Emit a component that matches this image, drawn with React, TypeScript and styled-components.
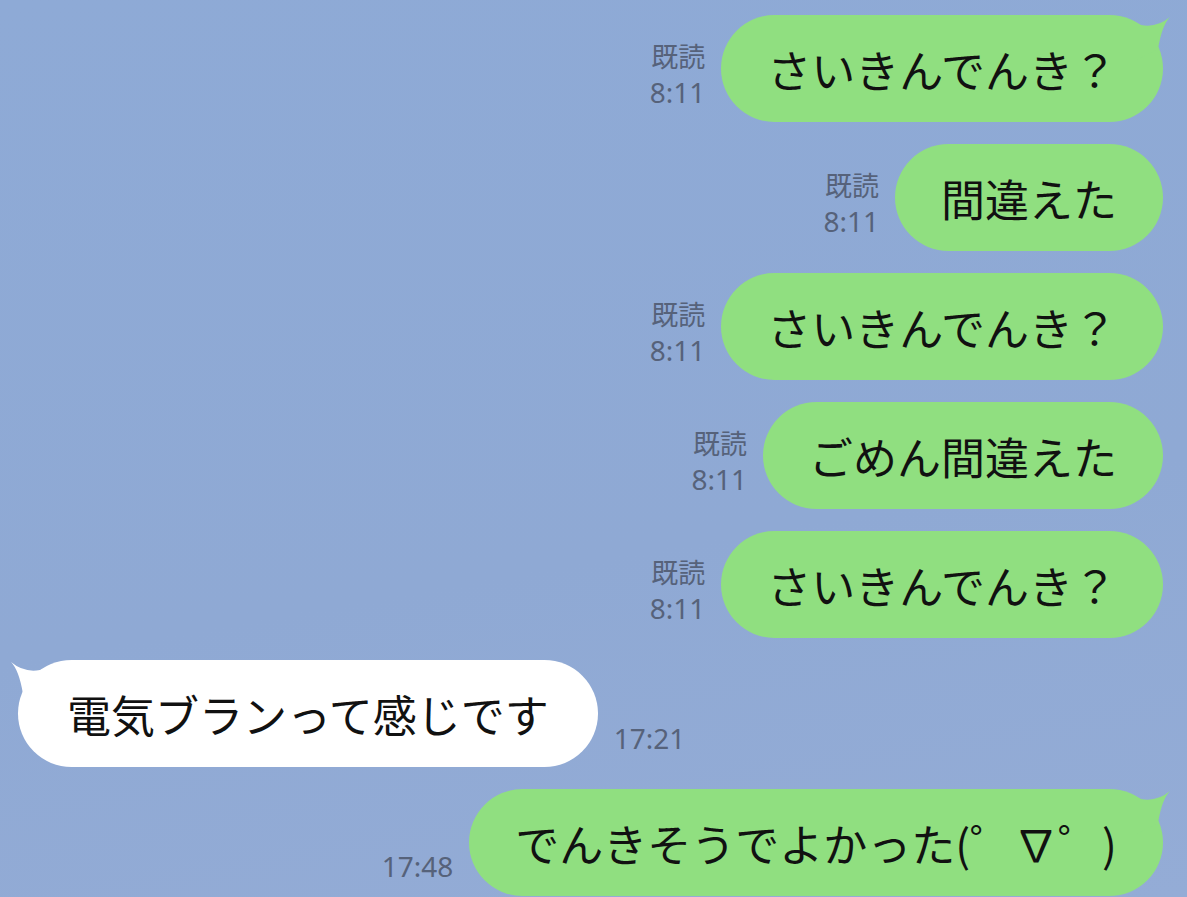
import React from "react";
import styled, { createGlobalStyle } from "styled-components";

const GlobalStyle = createGlobalStyle`
    body {
        margin: 0;
        overflow: hidden;
        font-family: "Noto Sans", "Noto Sans CJK JP", sans-serif;
    }
`;

const Screen = styled.div`
    display: flex;
    flex-direction: column;
    gap: 22px;
    width: 1187px;
    height: 897px;
    padding-top: 15px;
    box-sizing: border-box;
    overflow: hidden;
    background: linear-gradient(170deg, #8eaad6 0%, #8fa9d4 60%, #94acd6 100%);
`;

const Row = styled.div<{ $mine: boolean }>`
    display: flex;
    align-items: flex-end;
    justify-content: ${(p) => (p.$mine ? "flex-end" : "flex-start")};
    padding: ${(p) => (p.$mine ? "0 24px 0 0" : "0 0 0 18px")};
`;

const Meta = styled.div<{ $mine: boolean }>`
    display: flex;
    flex-direction: column;
    align-items: ${(p) => (p.$mine ? "flex-end" : "flex-start")};
    margin: ${(p) => (p.$mine ? "0 16px 13px 0" : "0 0 12px 16px")};
    color: #56627a;
    font-family: "Noto Sans", "Noto Sans CJK JP", sans-serif;
`;

const Read = styled.span`
    font-size: 27px;
    line-height: 38px;
    font-family: "Noto Sans CJK JP", sans-serif;
`;

const Time = styled.span`
    font-size: 28px;
    line-height: 34px;
`;

const Bubble = styled.div<{ $mine: boolean }>`
    position: relative;
    display: flex;
    align-items: center;
    height: 107px;
    padding: 0 ${(p) => (p.$mine ? "46px" : "49px")};
    border-radius: 54px;
    background: ${(p) => (p.$mine ? "#90df80" : "#ffffff")};
    color: #111;
    font-family: "Noto Sans CJK JP", sans-serif;
    font-size: 44px;
    white-space: nowrap;
`;

const Tail = styled.svg<{ $mine: boolean }>`
    position: absolute;
    top: 0;
    width: 40px;
    height: 46px;
    ${(p) => (p.$mine ? "right: -12px;" : "left: -12px; transform: scaleX(-1);")}
`;

type Msg = { mine: boolean; text: string; time: string; read?: boolean };

const messages: Msg[] = [
    { mine: true, text: "さいきんでんき？", time: "8:11", read: true },
    { mine: true, text: "間違えた", time: "8:11", read: true },
    { mine: true, text: "さいきんでんき？", time: "8:11", read: true },
    { mine: true, text: "ごめん間違えた", time: "8:11", read: true },
    { mine: true, text: "さいきんでんき？", time: "8:11", read: true },
    { mine: false, text: "電気ブランって感じです", time: "17:21" },
    { mine: true, text: "でんきそうでよかった(゜∇゜)", time: "17:48" },
];

const BubbleTail: React.FC<{ mine: boolean }> = ({ mine }) => (
    <Tail $mine={mine} viewBox="0 0 40 46">
        <path
            d="M0 8 L6 10 Q22 13 35 2 Q27 10 23 34 L0 46 Z"
            fill={mine ? "#90df80" : "#ffffff"}
        />
    </Tail>
);

const App: React.FC = () => {
    return (
        <>
            <GlobalStyle />
            <Screen>
                {messages.map((m, i) => {
                    const showTail = i === 0 || messages[i - 1].mine !== m.mine || m.time !== messages[i - 1].time;
                    return (
                        <Row key={i} $mine={m.mine}>
                            {m.mine && (
                                <Meta $mine>
                                    {m.read && <Read>既読</Read>}
                                    <Time>{m.time}</Time>
                                </Meta>
                            )}
                            <Bubble $mine={m.mine}>
                                {showTail && <BubbleTail mine={m.mine} />}
                                {m.text}
                            </Bubble>
                            {!m.mine && (
                                <Meta $mine={false}>
                                    <Time>{m.time}</Time>
                                </Meta>
                            )}
                        </Row>
                    );
                })}
            </Screen>
        </>
    );
};

export default App;
